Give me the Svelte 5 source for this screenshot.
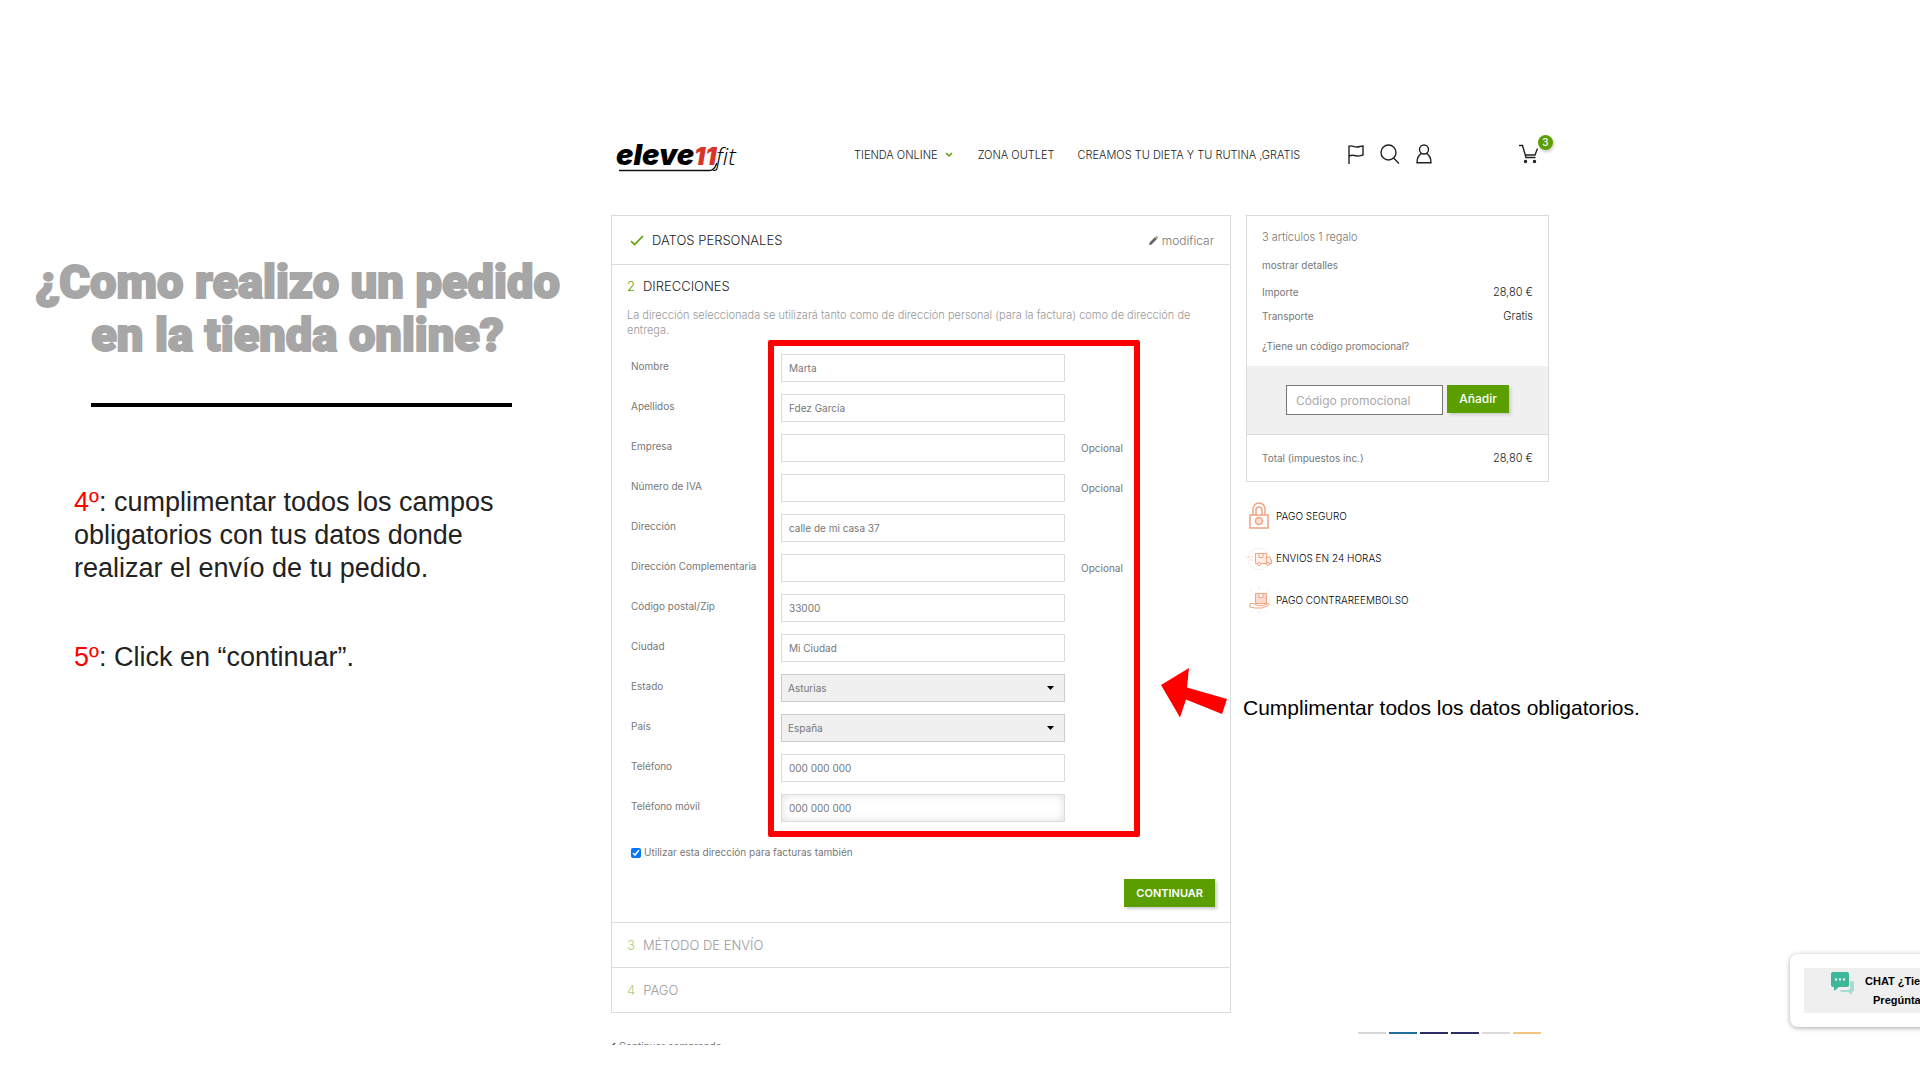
<script lang="ts">
    type Field = {
        id: string;
        label: string;
        value: string;
        optional?: boolean;
        select?: boolean;
        focus?: boolean;
    };

    let fields: Field[] = $state([
        { id: "nombre", label: "Nombre", value: "Marta" },
        { id: "apellidos", label: "Apellidos", value: "Fdez García" },
        { id: "empresa", label: "Empresa", value: "", optional: true },
        { id: "iva", label: "Número de IVA", value: "", optional: true },
        { id: "direccion", label: "Dirección", value: "calle de mi casa 37" },
        { id: "direccion2", label: "Dirección Complementaria", value: "", optional: true },
        { id: "zip", label: "Código postal/Zip", value: "33000" },
        { id: "ciudad", label: "Ciudad", value: "Mi Ciudad" },
        { id: "estado", label: "Estado", value: "Asturias", select: true },
        { id: "pais", label: "País", value: "España", select: true },
        { id: "telefono", label: "Teléfono", value: "000 000 000" },
        { id: "movil", label: "Teléfono móvil", value: "000 000 000", focus: true },
    ]);

    let promo = $state("");
    let sameInvoice = $state(true);

    const payments = ["#d8d8d8", "#1f6f9c", "#2b2e63", "#2b2e63", "#dedad8", "#f3c583"];
</script>

<div class="page">
    <section class="guide">
        <h1>¿Como realizo un pedido<br />en la tienda online?</h1>
        <hr />
        <div class="steps">
            <p><em>4º</em>: cumplimentar todos los campos obligatorios con tus datos donde realizar el envío de tu pedido.</p>
            <p><em>5º</em>: Click en “continuar”.</p>
        </div>
    </section>

    <div class="shop">
        <header>
            <a class="logo" href="#inicio" aria-label="eleve11fit">
                <svg width="124" height="32" viewBox="0 0 124 32">
                    <text x="0" y="23" class="logo-main">eleve</text>
                    <text x="78" y="23" class="logo-num">11</text>
                    <text x="100" y="23" class="logo-fit">fit</text>
                    <path d="M3 28.500H93Q97 28.500 99 25L101 21" fill="none" stroke="#111" stroke-width="1.500" />
                </svg>
            </a>
            <nav>
                <a href="#tienda">TIENDA ONLINE
                    <svg width="8" height="6" viewBox="0 0 8 6"><path d="M1 1l3 3 3-3" fill="none" stroke="#5a9e00" stroke-width="1.500" /></svg>
                </a>
                <a href="#outlet">ZONA OUTLET</a>
                <a href="#dieta">CREAMOS TU DIETA Y TU RUTINA ,GRATIS</a>
            </nav>
            <div class="tools">
                <button aria-label="Idioma">
                    <svg width="18" height="20" viewBox="0 0 18 20"><path d="M2 20V1.500M2 2.500c3-2 5 1 8 .5 2 0 4-1 6-1v9c-3 .5-4 1.500-7 .8-3-.8-5-.8-7 .4" /></svg>
                </button>
                <button aria-label="Buscar">
                    <svg width="20" height="20" viewBox="0 0 20 20"><circle cx="8.500" cy="8.500" r="7.500" /><path d="M13.500 14l5.500 5.500" /></svg>
                </button>
                <button aria-label="Mi cuenta">
                    <svg width="18" height="20" viewBox="0 0 18 20"><circle cx="9" cy="5.500" r="4.500" /><path d="M6.500 9.300C3.500 11 2 14 2 18.800h14c0-4.800-1.500-7.800-4.500-9.500" /></svg>
                </button>
            </div>
            <button class="cart" aria-label="Carrito">
                <svg width="20" height="20" viewBox="0 0 20 20"><path d="M0 1.500h3.500L7 13.500h9.500M18.500 4.500L16 11H6.500" /><circle cx="6.500" cy="17.500" r="1" class="dot" /><circle cx="15.500" cy="17.500" r="1" class="dot" /></svg>
                <span class="badge">3</span>
            </button>
        </header>

        <div class="columns">
            <main>
                <section class="card">
                    <div class="step done">
                        <svg width="14" height="11" viewBox="0 0 14 11"><path d="M1 6l3.500 3.500L13 1" fill="none" stroke="#5a9e00" stroke-width="1.600" /></svg>
                        <h2>DATOS PERSONALES</h2>
                        <button class="edit">
                            <svg width="9" height="9" viewBox="0 0 9 9"><path d="M0 9l.6-2.600L6 1l2 2-5.400 5.400zM6.600.5L7.200 0 9 1.800l-.6.6z" fill="#666" /></svg>
                            modificar
                        </button>
                    </div>

                    <form class="address" onsubmit={(e) => e.preventDefault()}>
                        <div class="heading">
                            <b>2</b>
                            <h2>DIRECCIONES</h2>
                        </div>
                        <p class="hint">La dirección seleccionada se utilizará tanto como de dirección personal (para la factura) como de dirección de entrega.</p>

                        <div class="fields">
                            {#each fields as field (field.id)}
                                <div class="row">
                                    <label for={field.id}>{field.label}</label>
                                    {#if field.select}
                                        <select id={field.id} bind:value={field.value}>
                                            <option>{field.value}</option>
                                        </select>
                                    {:else}
                                        <input id={field.id} type="text" class:focus={field.focus} bind:value={field.value} />
                                    {/if}
                                    {#if field.optional}<span>Opcional</span>{/if}
                                </div>
                            {/each}
                            <div class="highlight"></div>
                            <!-- callout over the form, pointing at the frame -->
                            <div class="callout">
                                <svg width="66" height="50" viewBox="0 0 66 50"><path d="M0 17L28 0 26 19.500 66 31 61 46 25 31.500 19 49.500z" fill="#f00" /></svg>
                                <span>Cumplimentar todos los datos obligatorios.</span>
                            </div>
                        </div>

                        <label class="check">
                            <input type="checkbox" bind:checked={sameInvoice} />
                            Utilizar esta dirección para facturas también
                        </label>
                        <button class="primary next">CONTINUAR</button>
                    </form>

                    <div class="step pending"><b>3</b><h2>MÉTODO DE ENVÍO</h2></div>
                    <div class="step pending"><b>4</b><h2>PAGO</h2></div>
                </section>
            </main>

            <aside>
                <section class="card summary">
                    <div class="lines">
                        <p class="count">3 artículos 1 regalo</p>
                        <a href="#detalles">mostrar detalles</a>
                        <div class="line"><span>Importe</span><strong>28,80 €</strong></div>
                        <div class="line"><span>Transporte</span><strong>Gratis</strong></div>
                        <a class="ask" href="#promo">¿Tiene un código promocional?</a>
                    </div>
                    <div class="promo">
                        <input type="text" aria-label="Código promocional" placeholder="Código promocional" bind:value={promo} />
                        <button class="primary">Añadir</button>
                    </div>
                    <div class="line total"><span>Total (impuestos inc.)</span><strong>28,80 €</strong></div>
                </section>

                <ul>
                    <li>
                        <svg width="26" height="28" viewBox="0 0 26 28" fill="none" stroke="#f0a482" stroke-width="1.500">
                            <path d="M4 13h18v13H4zM7 13V7a6 6 0 0 1 12 0v6M10 13V8a3 3 0 0 1 6 0v5" /><circle cx="13" cy="19" r="3.500" fill="#fbe0d4" />
                        </svg>
                        PAGO SEGURO
                    </li>
                    <li>
                        <svg width="26" height="28" viewBox="0 0 26 28" fill="none" stroke="#f0a482">
                            <circle cx="13" cy="15" r="11" stroke="#fdf0ea" /><path d="M0 13h8M3 16h5" stroke="#fadbce" /><path d="M9.500 9.500h11v10h-11zM13 9.500v4h4v-4M20.500 13h3l2 3v3.500h-5" fill="#fdeee7" /><circle cx="13" cy="20" r="1.500" fill="#fff" /><circle cx="22" cy="20" r="1.500" fill="#fff" />
                        </svg>
                        ENVIOS EN 24 HORAS
                    </li>
                    <li>
                        <svg width="26" height="28" viewBox="0 0 26 28" fill="none" stroke="#f0a482">
                            <path d="M9.500 7.500h11v10h-11zM13 7.500v4h4v-4" fill="#fbd9cb" /><path d="M4 17.500h4l4 2h5l5-2c2 0 1 2-1 2.500l-5 2H9l-5-1z" fill="#fff" /><path d="M5 4v2M13 1v3M22 3v2M5 26h2M13 25v2M20 25v2" stroke="#fbe6dc" />
                        </svg>
                        PAGO CONTRAREEMBOLSO
                    </li>
                </ul>
            </aside>
        </div>

        <footer>
            <a href="#seguir">
                <svg width="5" height="8" viewBox="0 0 5 8"><path d="M4 1L1 4l3 3" fill="none" stroke="#555" stroke-width="1.500" /></svg>
                Continuar comprando
            </a>
            <div class="payments">
                {#each payments as color}
                    <span style="background: {color}"></span>
                {/each}
            </div>
        </footer>
    </div>

    <div class="chat">
        <button>
            <svg width="24" height="24" viewBox="0 0 24 24">
                <path d="M19 9h2a2 2 0 0 1 2 2v7a2 2 0 0 1-2 2v3l-4-3h-6a2 2 0 0 1-2-2h8a2 2 0 0 0 2-2z" fill="#a5dccf" />
                <path d="M2 0h14a2 2 0 0 1 2 2v11a2 2 0 0 1-2 2H8l-5 4v-4H2a2 2 0 0 1-2-2V2a2 2 0 0 1 2-2z" fill="#3eb899" />
                <path d="M4 6.500h2v2H4zM8 6.500h2v2H8zM12 6.500h2v2h-2z" fill="#fff" />
            </svg>
            <span>CHAT ¿Tienes dudas?<br />Pregúntanos ahora</span>
        </button>
    </div>
</div>

<style>
    :global(body) {
        margin: 0;
        background: #fff;
    }
    .page {
        position: relative;
        display: grid;
        grid-template-columns: minmax(0, 611fr) minmax(0, 938fr) minmax(0, 371fr);
        overflow: hidden;
        min-height: 100vh;
        font: 400 10px/15px Inter, "Open Sans", sans-serif;
        color: #777;
    }
    h1, h2, p, ul {
        margin: 0;
        padding: 0;
        font-weight: inherit;
    }
    a {
        color: inherit;
        text-decoration: none;
    }
    button {
        border: none;
        background: none;
        padding: 0;
        font: inherit;
        color: inherit;
        cursor: pointer;
    }
    input, select {
        box-sizing: border-box;
        border: 1px solid #dcdcdc;
        border-radius: 0;
        font: inherit;
        color: #777;
    }

    /* guide */
    .guide {
        padding-top: 255px;
    }
    h1 {
        margin-right: 16px;
        text-align: center;
        white-space: nowrap;
        font: 900 47px/53px Roboto, sans-serif;
        color: #a6a6a6;
        -webkit-text-stroke: 2px #a6a6a6;
    }
    hr {
        height: 4px;
        margin: 42px 99px 0 91px;
        border: none;
        background: #000;
    }
    .steps {
        margin: 79px 90px 0 74px;
        font: 27px/33px "Liberation Sans", Arial, sans-serif;
        color: #222;
    }
    .steps p + p {
        margin-top: 56px;
    }
    em {
        font-style: normal;
        color: #f00;
    }

    /* header */
    .shop {
        padding-top: 126px;
    }
    header {
        display: flex;
        align-items: center;
        height: 56px;
        margin-bottom: 33px;
        font-size: 11px;
        font-weight: 300;
        color: #222;
    }
    .logo {
        margin: 8px 0 0 5px;
        height: 32px;
    }
    .logo-main {
        font: italic 900 29px Inter, sans-serif;
    }
    .logo-num {
        font: italic 900 25px Inter, sans-serif;
        fill: #d8352a;
    }
    .logo-fit {
        font: italic 300 24px "Open Sans", sans-serif;
    }
    nav {
        display: flex;
        gap: 23px;
        margin: 2px 0 0 114px;
        white-space: nowrap;
    }
    nav svg {
        margin: 0 2px 1px 4px;
    }
    .tools {
        display: flex;
        gap: 15px;
        margin-left: 47px;
    }
    header button {
        display: flex;
    }
    header button svg {
        fill: none;
        stroke: #222;
        stroke-width: 1.4;
    }
    .cart {
        position: relative;
        margin: 0 10px 0 auto;
    }
    .cart .dot {
        fill: #222;
    }
    .badge {
        position: absolute;
        top: -9px;
        right: -14px;
        width: 15px;
        border-radius: 50%;
        background: #5a9e00;
        box-shadow: 1px 2px 3px #ccc;
        font-size: 10px;
        font-weight: 500;
        text-align: center;
        color: #fff;
    }

    /* checkout */
    .columns {
        display: grid;
        grid-template-columns: 620fr 303fr;
        gap: 15px;
    }
    .card {
        border: 1px solid #dcdcdc;
    }
    .step {
        display: flex;
        align-items: center;
        gap: 8px;
        height: 44px;
        padding: 0 15px;
        border-top: 1px solid #dcdcdc;
    }
    .step.done {
        height: 48px;
        padding: 0 16px 0 18px;
        border-top: none;
    }
    h2, .heading b, .step b {
        font-size: 13px;
        line-height: 18px;
        font-weight: 300;
    }
    h2 {
        color: #222;
    }
    b {
        color: #5a9e00;
    }
    .pending h2 {
        color: #999;
    }
    .pending b {
        color: #a9cf7a;
    }
    .edit {
        margin-left: auto;
        font-size: 12px;
        font-weight: 300;
    }
    .address {
        display: flex;
        flex-direction: column;
        padding: 12px 15px 15px;
        border-top: 1px solid #dcdcdc;
    }
    .heading {
        display: flex;
        gap: 8px;
    }
    .hint {
        margin-top: 13px;
        font-size: 11px;
        font-weight: 300;
        color: #999;
    }
    .fields {
        position: relative;
        display: flex;
        flex-direction: column;
        gap: 12px;
        margin-top: 16px;
    }
    .row {
        display: grid;
        grid-template-columns: 134px 284fr 134fr;
        column-gap: 16px;
        align-items: center;
        padding-left: 4px;
    }
    .row label {
        margin-bottom: 4px;
        white-space: nowrap;
    }
    .row input, .row select {
        width: 100%;
        height: 28px;
        padding: 0 7px;
        background: #fff;
    }
    .row select {
        appearance: none;
        padding: 0 6px;
        border-color: #ccc;
        background: #f0f0f0 url("data:image/svg+xml,%3Csvg xmlns='http://www.w3.org/2000/svg' width='7' height='4'%3E%3Cpath d='M0 0h7L3.500 4z'/%3E%3C/svg%3E") no-repeat right 10px center;
    }
    .row input.focus {
        box-shadow: inset 0 0 8px #ddd;
    }
    .highlight {
        position: absolute;
        top: -14px;
        bottom: -15px;
        left: 141px;
        right: 75px;
        border: 6px solid #f00;
        border-radius: 2px;
        pointer-events: none;
    }
    .callout {
        position: absolute;
        top: 314px;
        left: calc(100% - 54px);
        display: flex;
        align-items: flex-end;
        gap: 16px;
        white-space: nowrap;
        font: 21px/20px "Liberation Sans", Arial, sans-serif;
        color: #000;
    }
    .check {
        display: flex;
        align-items: center;
        gap: 3px;
        margin: 23px 0 0 4px;
    }
    .check input {
        width: 10px;
        height: 10px;
        margin: 0;
    }
    .primary {
        background: #5a9e00;
        box-shadow: 2px 2px 3px #ccc;
        font-weight: 500;
        color: #fff;
    }
    .next {
        align-self: flex-end;
        margin-top: 19px;
        padding: 0 12px;
        font-size: 11px;
        font-weight: 600;
        line-height: 28px;
    }

    /* summary */
    .lines {
        display: flex;
        flex-direction: column;
        padding: 14px 15px 12px;
    }
    .count {
        margin-bottom: 13px;
        font-size: 11px;
        font-weight: 300;
    }
    .line {
        display: flex;
        justify-content: space-between;
        margin-top: 9px;
    }
    .lines a + .line {
        margin-top: 12px;
    }
    strong {
        font-size: 11px;
        font-weight: 300;
        color: #222;
    }
    .ask {
        margin-top: 15px;
    }
    .promo {
        display: flex;
        justify-content: center;
        align-items: flex-start;
        gap: 4px;
        padding: 19px 0;
        border-bottom: 1px solid #dcdcdc;
        background: #f0f0f0;
    }
    .promo input {
        width: 157px;
        height: 30px;
        padding: 0 9px;
        border-color: #777;
        font-size: 12px;
    }
    .promo input::placeholder {
        color: #aaa;
    }
    .promo button {
        width: 62px;
        font-size: 12px;
        line-height: 28px;
    }
    .total {
        margin: 0;
        padding: 16px 15px 15px;
    }
    ul {
        margin-top: 20px;
        list-style: none;
        font-weight: 300;
        color: #000;
    }
    li {
        display: flex;
        align-items: center;
        gap: 4px;
        height: 28px;
        margin-bottom: 14px;
    }

    /* the strip shows only the upper edge of its contents */
    footer {
        display: flex;
        justify-content: space-between;
        height: 13px;
        margin-top: 19px;
        overflow: hidden;
    }
    footer a {
        margin-top: 7px;
    }
    .payments {
        display: flex;
        gap: 3px;
        margin-right: 8px;
    }
    .payments span {
        width: 28px;
        height: 2px;
    }

    .chat {
        position: absolute;
        top: 954px;
        right: -98px;
        padding: 14px;
        border-radius: 8px;
        background: #fff;
        box-shadow: 0 1px 5px #aaa;
    }
    .chat button {
        display: flex;
        gap: 10px;
        width: 200px;
        height: 45px;
        padding: 4px 27px;
        background: #efefef;
        white-space: nowrap;
        font: 700 11px/19px "Liberation Sans", Arial, sans-serif;
        color: #000;
    }
    .chat svg {
        flex-shrink: 0;
    }
</style>
